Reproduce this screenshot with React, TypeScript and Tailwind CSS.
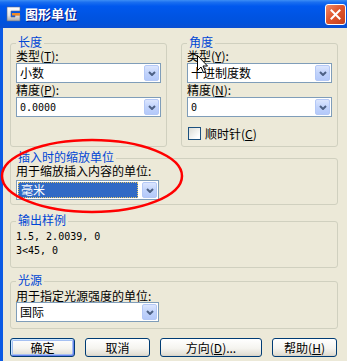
import React from 'react';

const legendCls = 'px-[2px] pb-[2px] leading-[12px] text-[#0046d5]';
const fieldsetCls = 'min-w-0 rounded-[3px] border border-[#d0d0bf] px-[5px]';

function DropArrow() {
    return (
        <div className="mr-[1px] flex h-[16px] w-[15px] items-center justify-center rounded-[2px] border border-[#b4c8f6] bg-[linear-gradient(to_bottom,#dce6fe,#c1d3fb_50%,#b4c9fa)]">
            <svg width="8" height="5" viewBox="0 0 8 5">
                <path d="M1 1 L4 4 L7 1" fill="none" stroke="#4d6185" strokeWidth="2" />
            </svg>
        </div>
    );
}

function Combo({ children, selected = false, narrow = false, className = '' }: { children: React.ReactNode; selected?: boolean; narrow?: boolean; className?: string }) {
    return (
        <div className={`flex h-[20px] items-center border border-[#7f9db9] bg-white ${narrow ? 'w-[143px]' : 'w-full'} ${className}`}>
            {selected ? (
                <div className="ml-[1px] mr-[4px] flex h-[16px] flex-1 items-center border border-dotted border-[#e6c86a] bg-[#316ac5] pl-[2px] leading-[14px] text-white">
                    {children}
                </div>
            ) : (
                <div className="flex-1 pl-[3px] leading-[14px]">{children}</div>
            )}
            <DropArrow />
        </div>
    );
}

function Mono({ children }: { children: React.ReactNode }) {
    return <span className="font-['DejaVu_Sans_Mono',monospace] text-[10px]">{children}</span>;
}

function XpButton({ children, wide = false, isDefault = false }: { children: React.ReactNode; wide?: boolean; isDefault?: boolean }) {
    return (
        <button
            className={`flex h-[19px] items-center justify-center rounded-[3px] border border-[#003c74] bg-[linear-gradient(to_bottom,#ffffff,#f5f4ef_55%,#e3e0d6_90%,#d6d0c5)] leading-[12px] ${wide ? 'w-[102px]' : 'w-[65px]'} ${isDefault ? 'shadow-[inset_1px_1px_0_#cee7ff,inset_-1px_-1px_0_#6982ee,inset_0_0_0_2px_#a5c0f2]' : ''}`}
        >
            {children}
        </button>
    );
}

function AppIcon() {
    return (
        <svg width="18" height="18" viewBox="0 0 18 18">
            <defs>
                <linearGradient id="gIcon" x1="0" y1="0" x2="0" y2="1">
                    <stop offset="0" stopColor="#ffffff" />
                    <stop offset="0.6" stopColor="#e4e4e4" />
                    <stop offset="1" stopColor="#a8a8a8" />
                </linearGradient>
            </defs>
            <path d="M3 2 H16 V6 H7 V12 H11 V10 H16 V16 H3 Z" fill="url(#gIcon)" stroke="#5a6a88" strokeWidth="0.6" />
            <rect x="8" y="8" width="8" height="2.5" fill="#f08a24" />
        </svg>
    );
}

function TitleBar() {
    return (
        <div className="flex h-[28px] items-center bg-[linear-gradient(to_bottom,#3d8ef5_0%,#1a6ff0_8%,#0058ee_22%,#0054e3_55%,#0052dd_80%,#0a4fd2_100%)] pl-[4px]">
            <AppIcon />
            <span className="ml-[3px] text-[13px] font-bold leading-[14px] text-white [text-shadow:1px_1px_0_#0a1883]">图形单位</span>
            <div className="ml-auto mr-[1px] flex h-[21px] w-[21px] items-center justify-center rounded-[3px] border border-white bg-[linear-gradient(135deg,#f08c6a,#e0562e_45%,#c4401c)]">
                <svg width="11" height="11" viewBox="0 0 11 11">
                    <path d="M1.5 1.5 L9.5 9.5 M9.5 1.5 L1.5 9.5" stroke="#ffffff" strokeWidth="2" strokeLinecap="square" />
                </svg>
            </div>
        </div>
    );
}

export default function App() {
    return (
        <div className="relative h-[361px] w-[347px] overflow-hidden bg-[#ece9d8] font-['Noto_Sans_CJK_SC',sans-serif] text-[12px] text-black">
            <TitleBar />
            <div className="h-[333px] border-l-[3px] border-[#0b5ae4] pl-[7px] pr-[9px] pt-[8px]">
                <div className="grid grid-cols-[157px_157px] gap-x-[14px]">
                    <fieldset className={`${fieldsetCls} pb-[6px]`}>
                        <legend className={legendCls}>长度</legend>
                        <div className="leading-[12px]">类型(<u>T</u>):</div>
                        <Combo className="mt-[1px]">小数</Combo>
                        <div className="flex h-[14px] items-center leading-[12px]">精度(<u>P</u>):</div>
                        <Combo><Mono>0.0000</Mono></Combo>
                    </fieldset>
                    <fieldset className={`${fieldsetCls} pb-[6px]`}>
                        <legend className={legendCls}>角度</legend>
                        <div className="leading-[12px]">类型(<u>Y</u>):</div>
                        <Combo className="mt-[1px]">十进制度数</Combo>
                        <div className="flex h-[14px] items-center leading-[12px]">精度(<u>N</u>):</div>
                        <Combo><Mono>0</Mono></Combo>
                        <div className="mt-[10px] flex items-center gap-[4px] pl-[1px]">
                            <div className="h-[13px] w-[13px] border border-[#1c5180] bg-[linear-gradient(135deg,#dcdcd5,#ffffff_80%)]" />
                            <span className="leading-[13px]">顺时针(<u>C</u>)</span>
                        </div>
                    </fieldset>
                </div>

                <fieldset className={`${fieldsetCls} mt-[4px] pb-[4px]`}>
                    <legend className={legendCls}>插入时的缩放单位</legend>
                    <div className="leading-[12px]">用于缩放插入内容的单位:</div>
                    <Combo selected narrow className="mt-[3px]">毫米</Combo>
                </fieldset>

                <fieldset className={`${fieldsetCls} mt-[9px] pb-[10px]`}>
                    <legend className={legendCls}>输出样例</legend>
                    <div className="mt-[1px] leading-[12px]"><Mono>1.5, 2.0039, 0</Mono></div>
                    <div className="leading-[12px]"><Mono>3&lt;45, 0</Mono></div>
                </fieldset>

                <fieldset className={`${fieldsetCls} mt-[6px] pb-[6px]`}>
                    <legend className={legendCls}>光源</legend>
                    <div className="mt-[1px] leading-[13px]">用于指定光源强度的单位:</div>
                    <Combo narrow>国际</Combo>
                </fieldset>

                <div className="mt-[9px] flex gap-[10px]">
                    <XpButton isDefault>确定</XpButton>
                    <XpButton>取消</XpButton>
                    <XpButton wide>方向(<u>D</u>)...</XpButton>
                    <XpButton>帮助(<u>H</u>)</XpButton>
                </div>
            </div>

            {/* red annotation ellipse */}
            <svg className="pointer-events-none absolute left-0 top-0" width="347" height="361">
                <ellipse cx="92" cy="176" rx="90" ry="36" fill="none" stroke="#ff0000" strokeWidth="2.5" />
            </svg>

            {/* mouse pointer */}
            <svg className="pointer-events-none absolute left-[197px] top-[55px]" width="12" height="19" viewBox="0 0 12 19">
                <path d="M0.5 0.5 L0.5 15.5 L4 12 L6.5 17.5 L8.5 16.5 L6 11 L10.5 11 Z" fill="#ffffff" stroke="#000000" strokeWidth="1" />
            </svg>
        </div>
    );
}
